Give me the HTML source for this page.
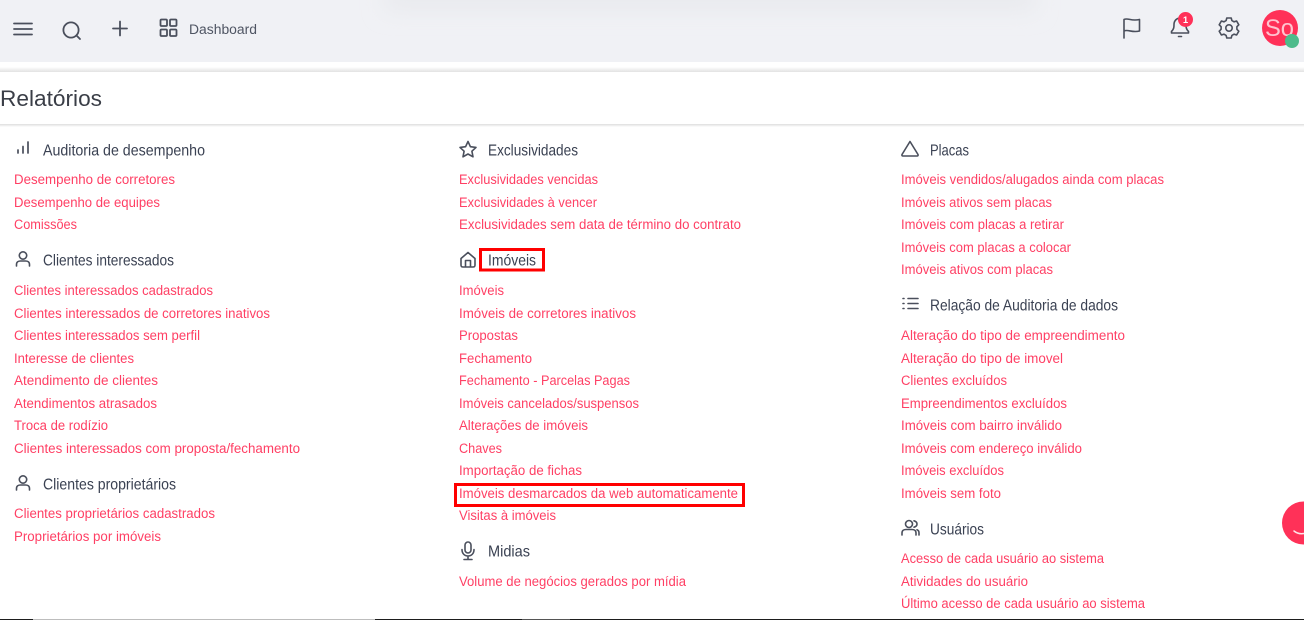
<!DOCTYPE html>
<html lang="pt-BR">
<head>
<meta charset="utf-8">
<title>Relatórios</title>
<style>
html,body{margin:0;padding:0;background:#fff;width:1304px;height:620px;overflow:hidden}
svg{display:block;position:absolute;left:0;top:0}
text{font-family:"Liberation Sans",sans-serif}
.l{font-size:13.5px;fill:#ff3f64}
.h{font-size:16px;fill:#3a4152}
.i{fill:none;stroke:#4a4f5c;stroke-width:1.6;stroke-linecap:round;stroke-linejoin:round}
</style>
</head>
<body>
<svg width="1304" height="620" viewBox="0 0 1304 620" xmlns="http://www.w3.org/2000/svg">
<defs>
<linearGradient id="sh" x1="0" y1="0" x2="0" y2="1"><stop offset="0" stop-color="#fff"/><stop offset="1" stop-color="#e2e2e2"/></linearGradient>
<linearGradient id="sb" x1="0" y1="0" x2="0" y2="1"><stop offset="0" stop-color="#dedede"/><stop offset="1" stop-color="#fff"/></linearGradient>
<filter id="soft" x="-20%" y="-200%" width="140%" height="500%"><feGaussianBlur stdDeviation="11"/></filter>
</defs>
<rect width="1304" height="620" fill="#fff"/>
<rect width="1304" height="62" fill="#f0f1f5"/>
<rect x="385" y="-14" width="650" height="24" fill="#e8e9ed" filter="url(#soft)"/>
<rect y="62" width="1304" height="5" fill="#fff"/>
<rect y="67" width="1304" height="5" fill="url(#sh)"/>
<rect y="124" width="1304" height="3" fill="url(#sb)"/>

<!-- top bar icons -->
<path class="i" d="M14 23.5H32M14 29H32M14 34.5H32" style="stroke-width:1.8"/>
<circle class="i" cx="71" cy="30" r="7.6" style="stroke-width:1.8"/>
<path class="i" d="M76.5 35.5L80 39" style="stroke-width:1.8"/>
<path class="i" d="M120 21.5V35.5M113 28.5H127" style="stroke-width:1.8"/>
<g class="i" style="stroke-width:1.8">
<rect x="160.500" y="19.500" width="6.500" height="6.500" rx="1"/>
<rect x="170" y="19.500" width="6.500" height="6.500" rx="1"/>
<rect x="160.500" y="29.500" width="6.500" height="6.500" rx="1"/>
<rect x="170" y="29.500" width="6.500" height="6.500" rx="1"/>
</g>
<text x="189" y="34" font-size="13.500" fill="#4f5563" textLength="68" lengthAdjust="spacingAndGlyphs">Dashboard</text>

<path class="i" d="M1124 38V19.500C1128 17.500 1131 21.500 1139.500 19.500V31C1132 33 1128 29 1124 31"/>
<path class="i" d="M1171.500 31.500C1174 29 1174 27 1174 24.500C1174 20.500 1177 18 1180 18C1183 18 1186 20.500 1186 24.500C1186 27 1186 29 1188.500 31.500V33H1171.500ZM1178.500 36.500H1181.500"/>
<circle cx="1185.500" cy="19.500" r="7.500" fill="#ff3158"/>
<text x="1185.500" y="23" font-size="9.500" font-weight="bold" fill="#fff" text-anchor="middle">1</text>
<g transform="translate(1229 28)">
<circle class="i" r="3.200"/>
<path class="i" d="M-2.200 -10H2.200L2.900 -7.400L5 -6.200L7.600 -7L9.800 -3.200L7.900 -1.300V1.300L9.800 3.200L7.600 7L5 6.200L2.900 7.400L2.200 10H-2.200L-2.900 7.400L-5 6.200L-7.600 7L-9.800 3.200L-7.900 1.300V-1.300L-9.800 -3.200L-7.600 -7L-5 -6.200L-2.900 -7.400Z"/>
</g>
<circle cx="1280" cy="28" r="18" fill="#ff3158"/>
<text x="1279.500" y="36" font-size="24" fill="#ffc4cf" text-anchor="middle" textLength="29" lengthAdjust="spacingAndGlyphs">So</text>
<circle cx="1292" cy="41" r="7" fill="#4dbb8b"/>

<text x="0" y="106" font-size="22" fill="#3a3e47" textLength="102" lengthAdjust="spacingAndGlyphs">Relatórios</text>

<!-- section icons -->
<path class="i" d="M18 153V150M23 153V146.500M28 153V142" style="stroke-width:1.700"/>
<g class="i"><circle cx="23" cy="255.500" r="3.700"/><path d="M16.500 266V264.500C16.500 262 18.500 261 20.500 261H25.500C27.500 261 29.500 262 29.500 264.500V266"/></g>
<g class="i"><circle cx="23" cy="479.500" r="3.700"/><path d="M16.500 490V488.500C16.500 486 18.500 485 20.500 485H25.500C27.500 485 29.500 486 29.500 488.500V490"/></g>
<path class="i" d="M468 141.500L470.400 146.700L476 147.400L471.900 151.200L473 156.800L468 154L463 156.800L464.100 151.200L460 147.400L465.600 146.700Z"/>
<path class="i" d="M461 258.500L468 252.500L475 258.500V265C475 266.500 474.500 267 473 267H463C461.500 267 461 266.500 461 265ZM465.500 267V260.500H470.500V267"/>
<g class="i"><rect x="465" y="542" width="6" height="11" rx="3"/><path d="M462 549.500C462 553.500 464.500 556 468 556C471.500 556 474 553.500 474 549.500M468 556V559M464 559.500H472"/></g>
<path class="i" d="M910 141.500L918 154.500C918.300 155.300 918 156 917 156H903C902 156 901.700 155.300 902 154.500Z"/>
<path class="i" d="M908 298.500H918M908 303.500H918M908 308.500H918M903 298.500H904M903 303.500H904M903 308.500H904"/>
<g class="i"><circle cx="909" cy="524" r="3.500"/><path d="M902 535V533C902 530.500 904 529.500 906 529.500H912C914 529.500 916 530.500 916 533V535M914 520.800C916 521.300 917 522.500 917 524C917 525.500 916 526.700 914 527.200M917 529.800C918.500 530.300 919 531.500 919 533V535"/></g>

<!-- headings -->
<g class="h">
<text x="43" y="155.500" textLength="162" lengthAdjust="spacingAndGlyphs">Auditoria de desempenho</text>
<text x="43" y="265.500" textLength="131" lengthAdjust="spacingAndGlyphs">Clientes interessados</text>
<text x="43" y="489.500" textLength="133" lengthAdjust="spacingAndGlyphs">Clientes proprietários</text>
<text x="488" y="155.500" textLength="90" lengthAdjust="spacingAndGlyphs">Exclusividades</text>
<text x="488" y="265.500" textLength="48" lengthAdjust="spacingAndGlyphs">Imóveis</text>
<text x="488" y="556.500" textLength="42" lengthAdjust="spacingAndGlyphs">Midias</text>
<text x="930" y="155.500" textLength="39" lengthAdjust="spacingAndGlyphs">Placas</text>
<text x="930" y="310.500" textLength="188" lengthAdjust="spacingAndGlyphs">Relação de Auditoria de dados</text>
<text x="930" y="534.500" textLength="54" lengthAdjust="spacingAndGlyphs">Usuários</text>
</g>

<g class="l">
<!-- links column 1 -->
<text x="14" y="184" textLength="161" lengthAdjust="spacingAndGlyphs">Desempenho de corretores</text>
<text x="14" y="207" textLength="146" lengthAdjust="spacingAndGlyphs">Desempenho de equipes</text>
<text x="14" y="229" textLength="63" lengthAdjust="spacingAndGlyphs">Comissões</text>
<text x="14" y="295" textLength="199" lengthAdjust="spacingAndGlyphs">Clientes interessados cadastrados</text>
<text x="14" y="318" textLength="256" lengthAdjust="spacingAndGlyphs">Clientes interessados de corretores inativos</text>
<text x="14" y="340" textLength="186" lengthAdjust="spacingAndGlyphs">Clientes interessados sem perfil</text>
<text x="14" y="363" textLength="120" lengthAdjust="spacingAndGlyphs">Interesse de clientes</text>
<text x="14" y="385" textLength="144" lengthAdjust="spacingAndGlyphs">Atendimento de clientes</text>
<text x="14" y="408" textLength="143" lengthAdjust="spacingAndGlyphs">Atendimentos atrasados</text>
<text x="14" y="430" textLength="94" lengthAdjust="spacingAndGlyphs">Troca de rodízio</text>
<text x="14" y="453" textLength="286" lengthAdjust="spacingAndGlyphs">Clientes interessados com proposta/fechamento</text>
<text x="14" y="518" textLength="201" lengthAdjust="spacingAndGlyphs">Clientes proprietários cadastrados</text>
<text x="14" y="541" textLength="147" lengthAdjust="spacingAndGlyphs">Proprietários por imóveis</text>

<!-- links column 2 -->
<text x="459" y="184" textLength="139" lengthAdjust="spacingAndGlyphs">Exclusividades vencidas</text>
<text x="459" y="207" textLength="138" lengthAdjust="spacingAndGlyphs">Exclusividades à vencer</text>
<text x="459" y="229" textLength="282" lengthAdjust="spacingAndGlyphs">Exclusividades sem data de término do contrato</text>
<text x="459" y="295" textLength="45" lengthAdjust="spacingAndGlyphs">Imóveis</text>
<text x="459" y="318" textLength="177" lengthAdjust="spacingAndGlyphs">Imóveis de corretores inativos</text>
<text x="459" y="340" textLength="59" lengthAdjust="spacingAndGlyphs">Propostas</text>
<text x="459" y="363" textLength="73" lengthAdjust="spacingAndGlyphs">Fechamento</text>
<text x="459" y="385" textLength="171" lengthAdjust="spacingAndGlyphs">Fechamento - Parcelas Pagas</text>
<text x="459" y="408" textLength="180" lengthAdjust="spacingAndGlyphs">Imóveis cancelados/suspensos</text>
<text x="459" y="430" textLength="129" lengthAdjust="spacingAndGlyphs">Alterações de imóveis</text>
<text x="459" y="453" textLength="43" lengthAdjust="spacingAndGlyphs">Chaves</text>
<text x="459" y="475" textLength="123" lengthAdjust="spacingAndGlyphs">Importação de fichas</text>
<text x="459" y="498" textLength="279" lengthAdjust="spacingAndGlyphs">Imóveis desmarcados da web automaticamente</text>
<text x="459" y="520" textLength="97" lengthAdjust="spacingAndGlyphs">Visitas à imóveis</text>
<text x="459" y="586" textLength="227" lengthAdjust="spacingAndGlyphs">Volume de negócios gerados por mídia</text>

<!-- links column 3 -->
<text x="901" y="184" textLength="263" lengthAdjust="spacingAndGlyphs">Imóveis vendidos/alugados ainda com placas</text>
<text x="901" y="207" textLength="151" lengthAdjust="spacingAndGlyphs">Imóveis ativos sem placas</text>
<text x="901" y="229" textLength="163" lengthAdjust="spacingAndGlyphs">Imóveis com placas a retirar</text>
<text x="901" y="252" textLength="170" lengthAdjust="spacingAndGlyphs">Imóveis com placas a colocar</text>
<text x="901" y="274" textLength="152" lengthAdjust="spacingAndGlyphs">Imóveis ativos com placas</text>
<text x="901" y="340" textLength="224" lengthAdjust="spacingAndGlyphs">Alteração do tipo de empreendimento</text>
<text x="901" y="363" textLength="162" lengthAdjust="spacingAndGlyphs">Alteração do tipo de imovel</text>
<text x="901" y="385" textLength="106" lengthAdjust="spacingAndGlyphs">Clientes excluídos</text>
<text x="901" y="408" textLength="166" lengthAdjust="spacingAndGlyphs">Empreendimentos excluídos</text>
<text x="901" y="430" textLength="161" lengthAdjust="spacingAndGlyphs">Imóveis com bairro inválido</text>
<text x="901" y="453" textLength="181" lengthAdjust="spacingAndGlyphs">Imóveis com endereço inválido</text>
<text x="901" y="475" textLength="103" lengthAdjust="spacingAndGlyphs">Imóveis excluídos</text>
<text x="901" y="498" textLength="100" lengthAdjust="spacingAndGlyphs">Imóveis sem foto</text>
<text x="901" y="563" textLength="203" lengthAdjust="spacingAndGlyphs">Acesso de cada usuário ao sistema</text>
<text x="901" y="586" textLength="127" lengthAdjust="spacingAndGlyphs">Atividades do usuário</text>
<text x="901" y="608" textLength="244" lengthAdjust="spacingAndGlyphs">Último acesso de cada usuário ao sistema</text>
</g>

<!-- red highlight boxes -->
<rect x="480.500" y="249.500" width="63" height="20.500" fill="none" stroke="#f00" stroke-width="3"/>
<rect x="455.500" y="484.500" width="288" height="21" fill="none" stroke="#f00" stroke-width="3"/>

<!-- floating chat -->
<circle cx="1303.500" cy="523" r="21.500" fill="#ff3158"/>
<path d="M1294 531C1297 533.500 1301 534 1304 533.500" fill="none" stroke="#ffe3e8" stroke-width="1.500" stroke-linecap="round"/>

<!-- bottom strip -->
<rect y="619" width="1304" height="1" fill="#1d1d1d"/>
<rect x="33" y="619" width="342" height="1" fill="#bdbdbd"/>
<rect x="522" y="619" width="48" height="1" fill="#555"/>
</svg>
</body>
</html>
